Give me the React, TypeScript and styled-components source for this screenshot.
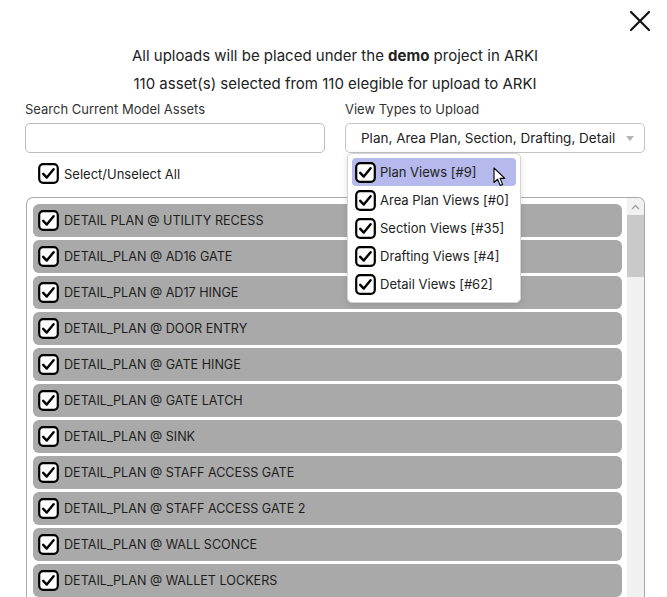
import styled, { createGlobalStyle } from "styled-components";

const GlobalStyle = createGlobalStyle`
  html, body {
    margin: 0;
    padding: 0;
    background: #fff;
  }
  body {
    font-family: "Inter", "Liberation Sans", sans-serif;
    color: #222;
  }
`;

const Modal = styled.div`
  width: 667px;
  height: 597px;
  box-sizing: border-box;
  padding: 8px 22px 0 25px;
  overflow: hidden;
  display: flex;
  flex-direction: column;
`;

const TopBar = styled.div`
  display: flex;
  justify-content: flex-end;
  height: 26px;
  margin-right: -8px;
`;

const CloseButton = styled.button`
  width: 26px;
  height: 26px;
  padding: 0;
  border: none;
  background: transparent;
  display: flex;
  align-items: center;
  justify-content: center;
  cursor: pointer;
`;

const Message = styled.p<{ $top: number }>`
  margin: ${(p) => p.$top}px 0 0;
  text-align: center;
  font-size: 15px;
  line-height: 20px;
  color: #222;

  b {
    font-weight: 700;
  }
`;

const Fields = styled.div`
  display: grid;
  grid-template-columns: 300px 300px;
  column-gap: 20px;
  margin-top: 6px;
`;

const Field = styled.div`
  display: flex;
  flex-direction: column;
  position: relative;
`;

const Label = styled.label`
  font-size: 13px;
  line-height: 18px;
  color: #333;
  margin-bottom: 5px;
`;

const TextInput = styled.input`
  height: 30px;
  box-sizing: border-box;
  border: 1px solid #bdbdbd;
  border-radius: 5px;
  background: #fff;
  outline: none;
`;

const SelectBox = styled.div`
  height: 30px;
  box-sizing: border-box;
  border: 1px solid #c4c4c4;
  border-radius: 5px;
  display: flex;
  align-items: center;
  padding: 0 10px 0 15px;
  font-size: 13.5px;
  color: #222;
`;

const SelectValue = styled.span`
  flex: 1;
  white-space: nowrap;
`;

const Caret = styled.span`
  width: 0;
  height: 0;
  border-left: 4px solid transparent;
  border-right: 4px solid transparent;
  border-top: 5px solid #b5b5b5;
`;

const Menu = styled.div`
  position: absolute;
  left: 2px;
  top: 53px;
  width: 174px;
  box-sizing: border-box;
  padding: 4px 4px 4px;
  background: #fff;
  border: 1px solid #d4d4d4;
  border-radius: 5px;
  box-shadow: 0 2px 6px rgba(0, 0, 0, 0.12);
  display: flex;
  flex-direction: column;
  z-index: 5;
`;

const MenuItem = styled.div<{ $active?: boolean }>`
  height: 28px;
  display: flex;
  align-items: center;
  gap: 4px;
  padding-left: 3px;
  border-radius: 4px;
  font-size: 13px;
  color: #222;
  background: ${(p) => (p.$active ? "#b5b9eb" : "transparent")};
  position: relative;
`;

const Pointer = styled.svg`
  position: absolute;
  left: 141px;
  top: 9px;
`;

const SelectAllRow = styled.div`
  display: flex;
  align-items: center;
  gap: 5px;
  margin: 10px 0 0 13px;
  font-size: 13px;
  color: #222;
`;

const ListBox = styled.div`
  margin-top: 13px;
  margin-left: 1px;
  width: 619px;
  height: 410px;
  box-sizing: border-box;
  border: 1px solid #a8a8a8;
  border-bottom: none;
  border-radius: 7px 7px 0 0;
  display: flex;
  overflow: hidden;
`;

const Rows = styled.div`
  flex: 1;
  display: flex;
  flex-direction: column;
  gap: 3px;
  padding: 6px 5px 0 6px;
`;

const Row = styled.div`
  height: 33px;
  flex-shrink: 0;
  background: #a9a9a9;
  border-radius: 6px;
  display: flex;
  align-items: center;
  gap: 5px;
  padding-left: 5px;
  font-size: 12.6px;
  color: #1e1e1e;
`;

const Scrollbar = styled.div`
  width: 17px;
  background: #f1f1f1;
  display: flex;
  flex-direction: column;
`;

const ScrollArrow = styled.div`
  height: 17px;
  display: flex;
  align-items: center;
  justify-content: center;
`;

const ScrollThumb = styled.div`
  height: 62px;
  background: #c9c9c9;
`;

function Check() {
  return (
    <svg width="21" height="21" viewBox="0 0 21 21">
      <rect x="1.2" y="1.2" width="18.6" height="18.6" rx="4" fill="#fff" stroke="#000" strokeWidth="2.2" />
      <path d="M5.2 10.8 L8.8 14.6 L15.6 6.2" fill="none" stroke="#000" strokeWidth="2.4" strokeLinecap="round" strokeLinejoin="round" />
    </svg>
  );
}

const assets = [
  "DETAIL PLAN @ UTILITY RECESS",
  "DETAIL_PLAN @ AD16 GATE",
  "DETAIL_PLAN @ AD17 HINGE",
  "DETAIL_PLAN @ DOOR ENTRY",
  "DETAIL_PLAN @ GATE HINGE",
  "DETAIL_PLAN @ GATE LATCH",
  "DETAIL_PLAN @ SINK",
  "DETAIL_PLAN @ STAFF ACCESS GATE",
  "DETAIL_PLAN @ STAFF ACCESS GATE 2",
  "DETAIL_PLAN @ WALL SCONCE",
  "DETAIL_PLAN @ WALLET LOCKERS",
];

const viewTypes = [
  "Plan Views [#9]",
  "Area Plan Views [#0]",
  "Section Views [#35]",
  "Drafting Views [#4]",
  "Detail Views [#62]",
];

export default function App() {
  return (
    <>
      <GlobalStyle />
      <Modal>
        <TopBar>
          <CloseButton type="button" aria-label="Close">
            <svg width="22" height="22" viewBox="0 0 22 22">
              <path d="M2 2 L20 20 M20 2 L2 20" stroke="#111" strokeWidth="2.2" strokeLinecap="round" />
            </svg>
          </CloseButton>
        </TopBar>
        <Message $top={12}>
          All uploads will be placed under the <b>demo</b> project in ARKI
        </Message>
        <Message $top={8}>110 asset(s) selected from 110 elegible for upload to ARKI</Message>
        <Fields>
          <Field>
            <Label>Search Current Model Assets</Label>
            <TextInput type="text" />
          </Field>
          <Field>
            <Label>View Types to Upload</Label>
            <SelectBox>
              <SelectValue>Plan, Area Plan, Section, Drafting, Detail</SelectValue>
              <Caret />
            </SelectBox>
            <Menu>
              {viewTypes.map((v, i) => (
                <MenuItem key={v} $active={i === 0}>
                  <Check />
                  {v}
                  {i === 0 && (
                    <Pointer width="13" height="20" viewBox="0 0 13 20">
                      <path d="M1 1 L1 15.5 L4.6 12.2 L7.2 18.4 L9.6 17.4 L7 11.4 L11.8 11.4 Z" fill="#fff" stroke="#000" strokeWidth="1.1" strokeLinejoin="round" />
                    </Pointer>
                  )}
                </MenuItem>
              ))}
            </Menu>
          </Field>
        </Fields>
        <SelectAllRow>
          <Check />
          Select/Unselect All
        </SelectAllRow>
        <ListBox>
          <Rows>
            {assets.map((a) => (
              <Row key={a}>
                <Check />
                {a}
              </Row>
            ))}
          </Rows>
          <Scrollbar>
            <ScrollArrow>
              <svg width="9" height="6" viewBox="0 0 9 6">
                <path d="M1 5 L4.5 1.5 L8 5" fill="none" stroke="#a3a3a3" strokeWidth="1.3" />
              </svg>
            </ScrollArrow>
            <ScrollThumb />
          </Scrollbar>
        </ListBox>
      </Modal>
    </>
  );
}
